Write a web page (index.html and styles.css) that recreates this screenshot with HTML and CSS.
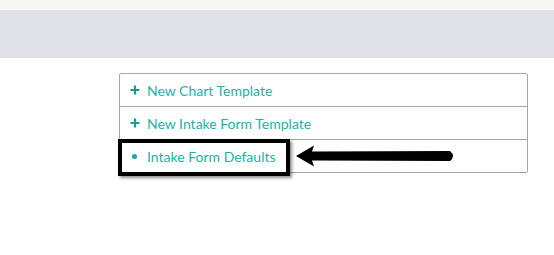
FILE: index.html
```html
<!DOCTYPE html>
<html lang="en">
<head>
    <meta charset="UTF-8">
    <meta name="viewport" content="width=device-width, initial-scale=1.0">
    <title>Templates</title>
    <link rel="stylesheet" href="styles.css">
</head>
<body>
    <div class="top-strip"></div>
    <div class="page-band"></div>

    <div class="content">
        <div class="menu-wrap">
            <ul class="menu">
                <li class="menu-item">
                    <span class="icon-plus">
                        <svg width="10" height="10" viewBox="0 0 10 10"><path d="M5 0.5v9M0.5 5h9" stroke="#199c8f" stroke-width="2.2"/></svg>
                    </span>
                    <a href="#" class="menu-link">New Chart Template</a>
                </li>
                <li class="menu-item">
                    <span class="icon-plus">
                        <svg width="10" height="10" viewBox="0 0 10 10"><path d="M5 0.5v9M0.5 5h9" stroke="#199c8f" stroke-width="2.2"/></svg>
                    </span>
                    <a href="#" class="menu-link">New Intake Form Template</a>
                </li>
                <li class="menu-item">
                    <span class="icon-dot"></span>
                    <a href="#" class="menu-link">Intake Form Defaults</a>
                </li>
            </ul>

            <!-- annotation -->
            <div class="highlight-box"></div>
            <svg class="arrow" width="170" height="26" viewBox="0 0 170 26">
                <defs>
                    <filter id="soft" x="-10%" y="-50%" width="120%" height="200%">
                        <feGaussianBlur stdDeviation="0.6"/>
                    </filter>
                </defs>
                <g filter="url(#soft)">
                    <path d="M1 11 L19 0.5 L17 6.5 L155 6 Q161 11 155 16 L17 15.5 L19 21.5 Z" fill="#000"/>
                </g>
            </svg>
        </div>
    </div>
</body>
</html>
```

FILE: styles.css
```css
* {
    box-sizing: border-box;
}
html, body {
    min-height: 100%;
}
body {
    margin: 0;
    min-height: 100vh;
    background-color: #ffffff;
    font-family: 'Lato', 'Liberation Sans', sans-serif;
}
.top-strip {
    height: 10px;
    background-color: #f8f7f6;
}
.page-band {
    height: 48px;
    background-color: #dfe1e6;
}
.content {
    padding: 15px 0 40px 119px;
}
.menu-wrap {
    position: relative;
    width: 409px;
}
.menu {
    list-style: none;
    margin: 0;
    padding: 0;
    border: 1px solid #9eaaa8;
    border-radius: 2px;
}
.menu-item {
    display: flex;
    align-items: center;
    height: 33px;
    padding-left: 10px;
    border-top: 1px solid #9eaaa8;
}
.menu-item:first-child {
    height: 32px;
    border-top: none;
}
.icon-plus {
    display: flex;
    width: 10px;
    margin-right: 7px;
}
.icon-dot {
    width: 5px;
    height: 5px;
    margin: 0 10px 0 2px;
    border-radius: 50%;
    background-color: #1aa89c;
}
.menu-link {
    font-size: 14px;
    color: #22b2a7;
    text-decoration: none;
}
.highlight-box {
    position: absolute;
    left: -1px;
    top: 66px;
    width: 172px;
    height: 37px;
    border: 4px solid #000;
    box-shadow: 2px 2px 3px rgba(0, 0, 0, 0.45);
}
.arrow {
    position: absolute;
    left: 176px;
    top: 72px;
}
```
